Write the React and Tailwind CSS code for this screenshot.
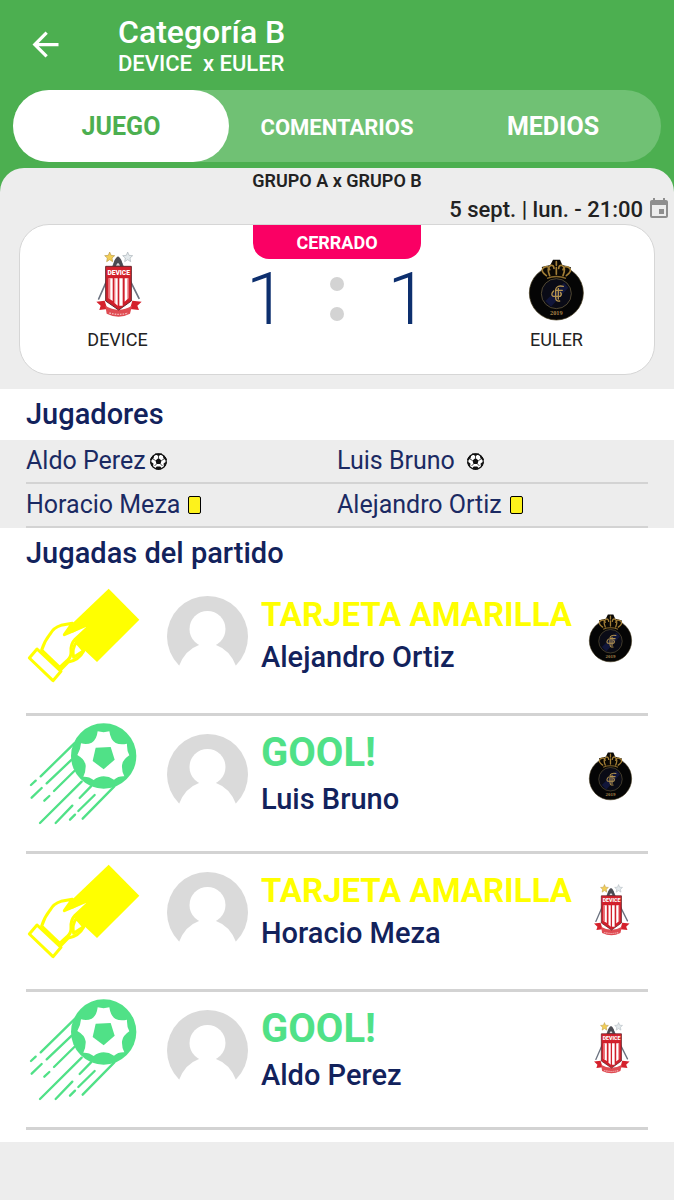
import React, { useState } from 'react';
import { MdArrowBack, MdEvent } from 'react-icons/md';

const TABS = [
  { id: 'juego', label: 'JUEGO', size: 'text-[25px]' },
  { id: 'comentarios', label: 'COMENTARIOS', size: 'text-[22px]' },
  { id: 'medios', label: 'MEDIOS', size: 'text-[25px]' },
];

const PLAYERS = [
  [
    { name: 'Aldo Perez', event: 'goal', gap: 'gap-1' },
    { name: 'Luis Bruno', event: 'goal', gap: 'gap-3' },
  ],
  [
    { name: 'Horacio Meza', event: 'card', gap: 'gap-2' },
    { name: 'Alejandro Ortiz', event: 'card', gap: 'gap-2' },
  ],
];

const PLAYS = [
  { id: 1, type: 'card', player: 'Alejandro Ortiz', team: 'euler' },
  { id: 2, type: 'goal', player: 'Luis Bruno', team: 'euler' },
  { id: 3, type: 'card', player: 'Horacio Meza', team: 'device' },
  { id: 4, type: 'goal', player: 'Aldo Perez', team: 'device' },
];

const STAR = 'M0 -15 L4 -5 L15 -4 L7 3 L9 14 L0 8 L-9 14 L-7 3 L-15 -4 L-4 -5 Z';

function DeviceLogo({ className }) {
  return (
    <svg viewBox="33 45 222 222" className={className} role="img" aria-label="DEVICE">
      {/* Compass legs behind the shield */}
      <path d="M137 76 L86 192 M150 76 L207 190" stroke="#6b7280" strokeWidth="5" strokeLinecap="round" />
      <path d="M129 96 Q132 70 144 64 Q156 70 159 96 Z" fill="#4b4b52" />
      <path d="M138 92 Q144 76 150 92 Z" fill="#d8d8dc" />
      <path d={STAR} transform="translate(119 66)" fill="#f3cf55" stroke="#b99a4c" strokeWidth="2" />
      <path d={STAR} transform="translate(173 66)" fill="#e3e9ec" stroke="#aab3b9" strokeWidth="2" />
      {/* Ribbon */}
      <path d="M79 200 L104 197 L112 222 L88 225 L92 212 Z" fill="#d5212c" />
      <path d="M215 200 L187 197 L180 222 L207 225 L202 212 Z" fill="#d5212c" />
      <path d="M106 212 Q146 236 186 212 L180 236 Q146 254 110 236 Z" fill="#df4b52" />
      <path d="M118 234 Q146 242 174 234" fill="none" stroke="#f4b6b8" strokeWidth="4" strokeDasharray="5 3" />
      {/* Shield */}
      <path d="M107 94 H184 V198 L146 225 L107 198 Z" fill="#cf1f2b" stroke="#66282e" strokeWidth="3" />
      <path d="M116 130 H128 V198 L116 190 Z M133 130 H143 V212 L133 203 Z M148 130 H158 V212 L148 212 Z M164 130 H175 V190 L164 200 Z" fill="#fff" />
      <path d="M116 130 H121 V194 L116 190 Z M133 130 H136 V206 L133 203 Z M172 130 H175 V190 L172 193 Z" fill="#ef7278" />
      <rect x="109" y="97" width="73" height="28" fill="#d3222d" />
      <text x="146" y="119" textAnchor="middle" fontSize="20" fontWeight="900" fill="#fff" fontFamily="Roboto, sans-serif">
        DEVICE
      </text>
    </svg>
  );
}

function EulerLogo({ className }) {
  return (
    <svg viewBox="57 45 222 222" className={className} role="img" aria-label="EULER">
      <circle cx="166" cy="174" r="81" fill="#050505" stroke="#3d3214" strokeWidth="2" />
      <path d="M122 96 L148 90 L156 74 H177 L184 90 L210 97 L200 124 H132 Z" fill="#0a0804" />
      {/* Crown */}
      <g fill="none" stroke="#a27e36" strokeWidth="5" strokeLinecap="round">
        <path d="M136 122 Q116 108 128 98 Q142 90 146 104" />
        <path d="M146 122 Q136 98 150 91 Q158 90 159 100" />
        <path d="M196 122 Q216 108 204 98 Q190 90 186 104" />
        <path d="M186 122 Q196 98 182 91 Q174 90 173 100" />
        <path d="M166 80 V91 M166 98 V118" />
      </g>
      <path d="M138 130 Q166 119 195 130" fill="none" stroke="#8a6a2c" strokeWidth="4" />
      {/* Inner medal */}
      <circle cx="166" cy="176" r="45" fill="#0a0b16" stroke="#746642" strokeWidth="2" />
      <path d="M133 198 L189 143 L202 158 L150 215 Z" fill="#11163a" />
      <path
        d="M187 154 Q166 150 164 164 V188 Q164 200 176 198 M164 166 H184 M158 168 Q148 178 156 184 H178 M172 160 V192 M178 172 Q184 178 178 184"
        fill="none"
        stroke="#b3924e"
        strokeWidth="4"
        strokeLinecap="round"
      />
      <text x="166" y="240" textAnchor="middle" fontSize="19" fontWeight="700" fill="#a5834a" fontFamily="Liberation Serif, serif">
        2019
      </text>
    </svg>
  );
}

function TeamLogo({ team, className }) {
  return team === 'device' ? <DeviceLogo className={className} /> : <EulerLogo className={className} />;
}

function CardPlayIcon() {
  return (
    <svg viewBox="33 12 342 324" className="h-[108px] w-[114px]" aria-hidden="true">
      <path d="M281 26 L373 119 L246 246 L172 176 L160 142 Z" fill="#ffff00" />
      <g stroke="#ffff00" strokeWidth="9" strokeLinejoin="round" strokeLinecap="round">
        {/* Hand */}
        <path
          d="M80 210 Q88 184 104 164 Q116 142 138 136 L172 130 L148 164 L236 126 L180 178 Q166 192 168 216 Q169 232 156 242 L134 262 Z"
          fill="#fff"
        />
        <path d="M184 187 Q170 206 176 232 L206 212 Z" fill="#fff" />
        <path d="M206 213 Q192 240 160 246 L138 268" fill="none" />
        {/* Cuff */}
        <path d="M66 207 L138 274 L114 302 L43 234 Z" fill="#fff" />
      </g>
      <path d="M148 164 L170 132 L206 118 L232 126 L176 157 Z" fill="#ffff00" />
    </svg>
  );
}

function GoalPlayIcon() {
  return (
    <svg viewBox="33 21 342 324" className="h-[108px] w-[114px]" aria-hidden="true">
      <g stroke="#50e187" strokeWidth="7" strokeLinecap="round">
        <path d="M178 85 L77 184 M62 197 L48 210" />
        <path d="M170 134 L95 205 M80 219 L50 248" />
        <path d="M178 168 L117 228 M103 243 L88 257" />
        <path d="M200 200 L75 324" />
        <path d="M228 214 L194 249 M172 272 L122 324" />
        <path d="M239 240 L190 288 M180 299 L165 314" />
        <path d="M298 214 L203 311" />
      </g>
      <circle cx="266" cy="123" r="98" fill="#50e187" />
      {/* White seams star */}
      <path
        d="M248 49 Q266 54 283 49 Q287 76 302 84 Q316 90 336 86 Q335 106 343 121 Q323 134 321 151 Q320 169 328 184 Q310 183 297 194 Q282 184 266 184 Q250 184 236 195 Q222 184 205 185 Q213 168 212 151 Q209 132 187 120 Q197 104 198 85 Q216 90 230 83 Q245 75 248 49 Z"
        fill="#fff"
      />
      <path d="M242 98 L287 96 L299 134 L266 163 L233 138 Z" fill="#50e187" />
    </svg>
  );
}

function Avatar() {
  return (
    <svg viewBox="0 0 81 70" className="w-[81px]" aria-hidden="true">
      <circle cx="40.5" cy="40.5" r="40.5" fill="#dadada" />
      <circle cx="40.5" cy="33" r="18" fill="#fff" />
      <path d="M12 70 Q18 54 32 49 L32 45 H49 L49 49 Q63 54 69 70 L81 81 H0 Z" fill="#fff" />
    </svg>
  );
}

function SmallBall() {
  return (
    <svg viewBox="0 0 34 34" className="h-[17px] w-[17px]" role="img" aria-label="Gol">
      <circle cx="17" cy="17" r="15.5" fill="#fff" stroke="#111" strokeWidth="2.5" />
      <path d="M17 10 L23 15 L21 22 H13 L11 15 Z" fill="#111" />
      <path
        d="M11 2 L17 5 L23 2 Z M1 14 L6 11 L7 6 L3 9 Z M33 14 L28 11 L27 6 L31 9 Z M5 27 L6 21 L1 19 Z M29 27 L28 21 L33 19 Z M12 32 L13 28 H21 L22 32 Z"
        fill="#111"
        stroke="#111"
        strokeWidth="2"
      />
      <path d="M17 10 V5 M23 15 L28 12 M21 22 L25 26 M13 22 L9 26 M11 15 L6 12" stroke="#111" strokeWidth="1.5" />
    </svg>
  );
}

function SmallCard() {
  return <span role="img" aria-label="Tarjeta amarilla" className="h-[18px] w-[13px] rounded-xs border border-black bg-[#fdf21c]" />;
}

function Team({ team, name }) {
  return (
    <div className="flex w-[195px] flex-col items-center pt-[25px]">
      <TeamLogo team={team} className="h-[74px] w-[74px]" />
      <span className="mt-1 text-[18px] leading-6 text-[#222]">{name}</span>
    </div>
  );
}

function Play({ play }) {
  const isGoal = play.type === 'goal';
  return (
    <li className="flex h-[138px] items-start border-b-3 border-[#d3d3d3]">
      <div className="w-[141px] shrink-0 pt-[6px]">{isGoal ? <GoalPlayIcon /> : <CardPlayIcon />}</div>
      <div className="w-[94px] shrink-0 pt-[18px]">
        <Avatar />
      </div>
      <div className="min-w-0 flex-1 whitespace-nowrap pt-[15px]">
        {isGoal ? (
          <h3 className="mb-1 text-[40px] font-bold leading-[44px] text-[#50e187]">GOOL!</h3>
        ) : (
          <h3 className="text-[33px] font-bold leading-[44px] text-[#ffff00]">TARJETA AMARILLA</h3>
        )}
        <p className="text-[29px] font-medium leading-10 text-[#12225c]">{play.player}</p>
      </div>
      <TeamLogo team={play.team} className="mr-2 mt-[29px] h-[58px] w-[58px] shrink-0" />
    </li>
  );
}

export default function App() {
  const [tab, setTab] = useState('juego');

  return (
    <div className="min-h-screen bg-[#ededed] font-['Roboto',sans-serif]">
      <div className="bg-[#4caf50]">
        <header className="flex h-[90px] items-center gap-[53px] pl-[26px]">
          <button type="button" aria-label="Volver" className="pb-0.5 text-white">
            <MdArrowBack size={39} />
          </button>
          <div className="pt-0.5 text-white">
            <h1 className="text-[32px] font-medium leading-9">Categoría B</h1>
            <p className="whitespace-pre text-[22px] font-medium leading-7">DEVICE  x EULER</p>
          </div>
        </header>

        <nav className="mx-[13px] mb-[6px] flex h-[72px] rounded-full bg-[#70c174]">
          {TABS.map((t) => (
            <button
              key={t.id}
              type="button"
              onClick={() => setTab(t.id)}
              className={`flex-1 rounded-full pt-0.5 font-bold ${t.size} ${tab === t.id ? 'bg-white text-[#4caf50]' : 'text-white'}`}
            >
              {t.label}
            </button>
          ))}
        </nav>

        {/* Score panel */}
        <section className="rounded-t-3xl bg-[#ededed] px-[19px] pb-[14px]">
          <p className="text-center text-[18px] font-semibold leading-[26px] text-[#222]">GRUPO A x GRUPO B</p>
          <div className="-mr-4 flex h-[30px] items-center justify-end gap-1 text-[22px] font-medium text-[#222]">
            <time>5 sept. | lun. - 21:00</time>
            <MdEvent size={24} className="text-[#8e8e8e]" />
          </div>

          <div className="flex h-[151px] justify-between rounded-[30px] border border-[#d6d6d6] bg-white">
            <Team team="device" name="DEVICE" />
            <div className="flex flex-1 flex-col items-center">
              <span className="flex h-[34px] w-[168px] items-center justify-center rounded-b-2xl bg-[#fa0064] text-[18px] font-bold text-white">
                CERRADO
              </span>
              <div className="flex w-[182px] items-center justify-between text-[73px] font-light leading-[80px] text-[#0d2f6e]">
                <span>1</span>
                <span className="flex flex-col gap-4">
                  <i className="h-[14px] w-[14px] rounded-full bg-[#d3d3d3]" />
                  <i className="h-[14px] w-[14px] rounded-full bg-[#d3d3d3]" />
                </span>
                <span>1</span>
              </div>
            </div>
            <Team team="euler" name="EULER" />
          </div>
        </section>
      </div>

      <section className="bg-white">
        <h2 className="px-[26px] pb-px text-[29px] font-medium leading-[50px] text-[#12225c]">Jugadores</h2>
        <ul className="bg-[#ededed] px-[26px]">
          {PLAYERS.map((row) => (
            <li key={row[0].name} className="grid h-11 grid-cols-2 border-b-2 border-[#d3d3d3]">
              {row.map((p) => (
                <div key={p.name} className={`flex items-center text-[25px] text-[#1b2a63] ${p.gap}`}>
                  {p.name}
                  {p.event === 'goal' ? <SmallBall /> : <SmallCard />}
                </div>
              ))}
            </li>
          ))}
        </ul>
      </section>

      <section className="bg-white px-[26px] pb-3">
        <h2 className="text-[29px] font-medium leading-[50px] text-[#12225c]">Jugadas del partido</h2>
        <ul>
          {PLAYS.map((play) => (
            <Play key={play.id} play={play} />
          ))}
        </ul>
      </section>
    </div>
  );
}
